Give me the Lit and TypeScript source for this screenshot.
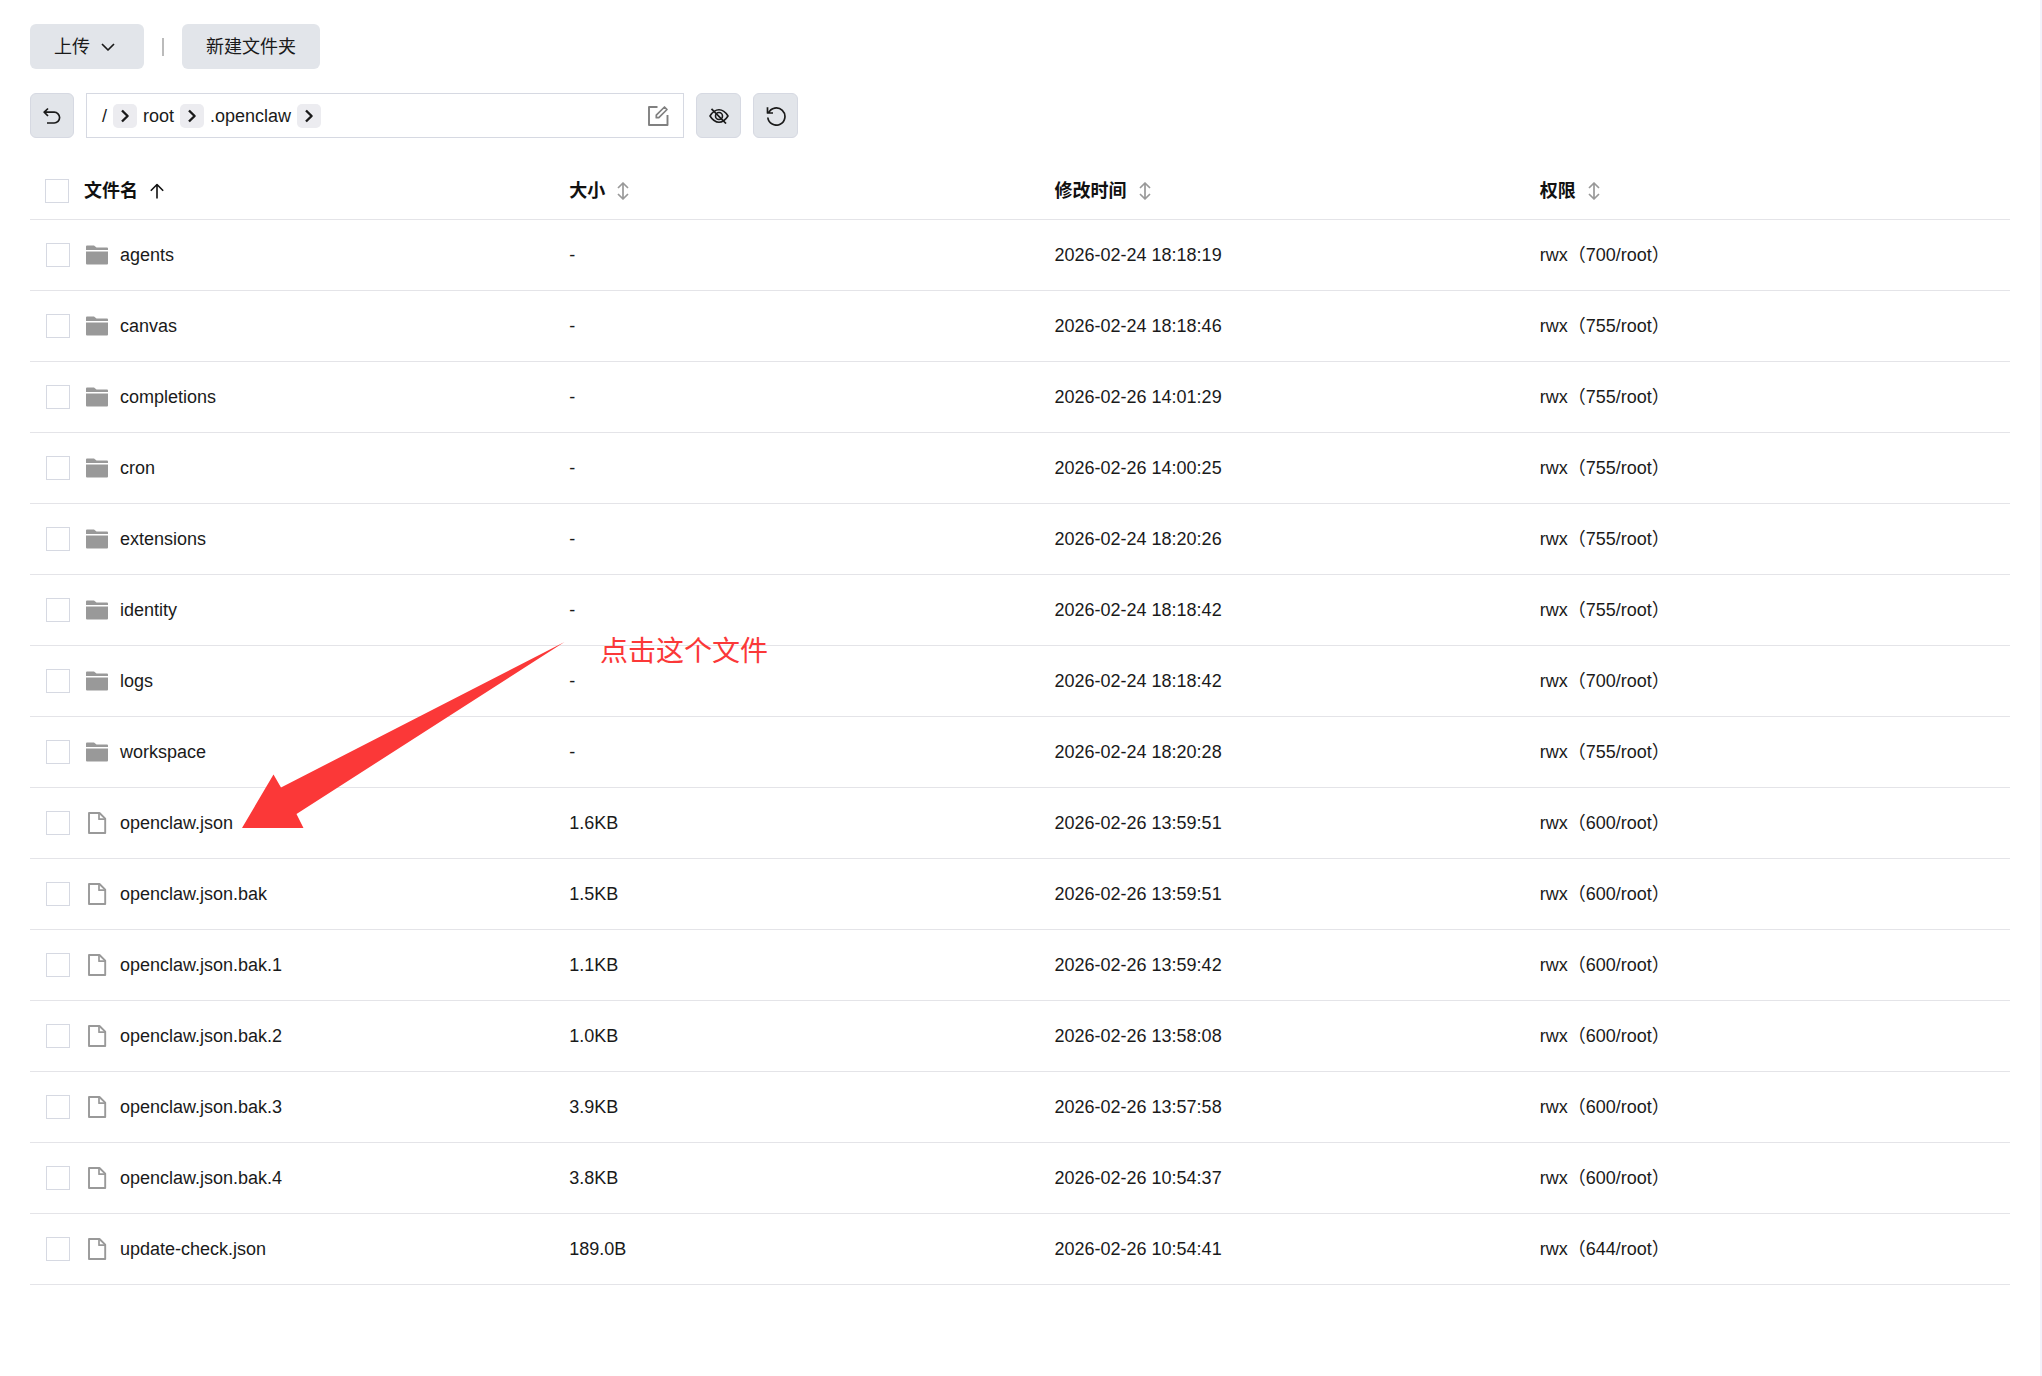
import { LitElement, html, css, svg } from "lit";
import { customElement, property } from "lit/decorators.js";

interface Entry {
  name: string;
  dir: boolean;
  size: string;
  time: string;
  mode: string;
}

const dir = (name: string, time: string, mode: string): Entry => ({ name, dir: true, size: "-", time, mode });
const file = (name: string, size: string, time: string, mode = "600"): Entry => ({ name, dir: false, size, time, mode });

const entries: Entry[] = [
  dir("agents", "2026-02-24 18:18:19", "700"),
  dir("canvas", "2026-02-24 18:18:46", "755"),
  dir("completions", "2026-02-26 14:01:29", "755"),
  dir("cron", "2026-02-26 14:00:25", "755"),
  dir("extensions", "2026-02-24 18:20:26", "755"),
  dir("identity", "2026-02-24 18:18:42", "755"),
  dir("logs", "2026-02-24 18:18:42", "700"),
  dir("workspace", "2026-02-24 18:20:28", "755"),
  file("openclaw.json", "1.6KB", "2026-02-26 13:59:51"),
  file("openclaw.json.bak", "1.5KB", "2026-02-26 13:59:51"),
  file("openclaw.json.bak.1", "1.1KB", "2026-02-26 13:59:42"),
  file("openclaw.json.bak.2", "1.0KB", "2026-02-26 13:58:08"),
  file("openclaw.json.bak.3", "3.9KB", "2026-02-26 13:57:58"),
  file("openclaw.json.bak.4", "3.8KB", "2026-02-26 10:54:37"),
  file("update-check.json", "189.0B", "2026-02-26 10:54:41", "644"),
];

const glyphs: Record<string, { w: number; h: number; body: unknown }> = {
  down: { w: 14, h: 10, body: svg`<path d="M1 2l6 6 6-6" stroke-width="1.7"/>` },
  right: { w: 10, h: 14, body: svg`<path d="M2 1.5L7.6 7 2 12.5" stroke-width="2.4"/>` },
  back: { w: 18, h: 18, body: svg`<path d="M5 1.500L1.200 5.200 5 9M1.500 5.200H11.200a5.400 5.400 0 0 1 0 10.800H4" stroke-width="1.700"/>` },
  edit: { w: 22, h: 22, body: svg`<path d="M10.500 2H2v18h18.500V10" stroke-width="1.900"/><path d="M9.300 12.700V10.200L17.500 2 20 4.500 11.800 12.700z" stroke-width="1.700"/>` },
  eye: { w: 20, h: 16, body: svg`<path d="M1 8C3.500 4 6.500 1.800 10 1.800S16.500 4 19 8C16.500 12 13.500 14.200 10 14.200S3.500 12 1 8z" stroke-width="1.600"/><circle cx="10" cy="8" r="3.500" stroke-width="1.600"/><path d="M2.500.8L17 15.500" stroke-width="1.700"/>` },
  reload: { w: 20, h: 20, body: svg`<path d="M2.500 7A8.600 8.600 0 1 1 1.800 11.500M1.500 1.300V7H7" stroke-width="1.700"/>` },
  up: { w: 14, h: 16, body: svg`<path d="M7 15.500V1.500M.8 7.700L7 1.500l6.200 6.200" stroke-width="1.600"/>` },
  sort: { w: 12, h: 18, body: svg`<path d="M6 1.500v15M1 6l5-5 5 5M1 12l5 5 5-5" stroke-width="1.700"/>` },
  folder: { w: 22, h: 20, body: svg`<path d="M0 5V1.500Q0 .5 1 .5H8L10.500 2.500H21Q22 2.500 22 3.500V5z" fill="currentColor" stroke="none"/><path d="M0 6.500H22V18.500Q22 19.500 21 19.500H1Q0 19.500 0 18.500z" fill="currentColor" stroke="none"/>` },
  file: { w: 22, h: 22, body: svg`<path d="M3 1H13.500L19.200 6.700V21H3z" stroke-width="1.900"/><path d="M13 1V7.200H19.200" stroke-width="1.700"/>` },
};

@customElement("ui-icon")
export class UiIcon extends LitElement {
  @property() name = "";
  static styles = css`
    :host { display: inline-flex; flex: none; }
    .glyph { display: block; fill: none; stroke: currentColor; stroke-linejoin: round; }
  `;
  render() {
    const g = glyphs[this.name];
    return html`<svg class="glyph" width=${g.w} height=${g.h} viewBox="0 0 ${g.w} ${g.h}" aria-hidden="true">${g.body}</svg>`;
  }
}

@customElement("app-root")
export class AppRoot extends LitElement {
  static styles = css`
    :host {
      display: block;
      box-sizing: border-box;
      min-height: 100vh;
      padding: 24px 30px;
      border-right: 2px solid #f3f3fb;
      background: #fff;
      color: #1a1a1a;
      font: 18px/24px "Liberation Sans", "Noto Sans CJK SC", sans-serif;
    }
    .toolbar, .pathbar { display: flex; align-items: center; }
    .toolbar { gap: 18px; }
    .pathbar { gap: 12px; margin: 24px 0 26px; }
    button { font: inherit; color: inherit; cursor: pointer; }
    .btn {
      display: flex;
      align-items: center;
      justify-content: center;
      height: 45px;
      padding: 0 24px;
      border: 0;
      border-radius: 6px;
      background: #e2e5ea;
    }
    .drop { gap: 11px; padding-right: 29px; }
    .divider { width: 2px; height: 18px; background: #bbb; }
    .square { width: 45px; padding: 0; border: 1px solid #d6d9e2; }
    .back { width: 44px; }
    .path {
      box-sizing: border-box;
      display: flex;
      align-items: center;
      gap: 6px;
      flex: 0 1 598px;
      height: 45px;
      padding: 0 14px 0 15px;
      border: 1px solid #d6d9e2;
    }
    a { color: inherit; text-decoration: none; }
    .step, .plain, .sort {
      display: inline-flex;
      align-items: center;
      justify-content: center;
      padding: 0;
      border: 0;
      background: none;
    }
    .step { width: 24px; height: 24px; border-radius: 5px; background: #ececf0; }
    .edit { margin-left: auto; color: #808080; }
    .files { position: relative; }
    table { width: 100%; table-layout: fixed; border-collapse: separate; border-spacing: 0; }
    .pick { width: 39px; }
    th, td {
      box-sizing: border-box;
      padding: 0 0 0 15px;
      border-bottom: 1px solid #e4e4e8;
      text-align: left;
      vertical-align: middle;
      white-space: nowrap;
    }
    th { height: 56px; padding-bottom: 2px; font-weight: 700; color: #111; }
    td { height: 71px; }
    .box { padding-left: 16px; }
    .sort { gap: 12px; font-weight: 700; }
    .muted { color: #999; }
    .check {
      appearance: none;
      box-sizing: border-box;
      display: block;
      width: 24px;
      height: 24px;
      margin: 0;
      border: 1px solid #d6d9e2;
      background: #fff;
    }
    .name { display: flex; align-items: center; gap: 12px; padding-left: 2px; }
    .kind { color: #999; }
    .arrow { position: absolute; left: 212px; top: 478px; fill: #fb3838; pointer-events: none; }
    .note {
      position: absolute;
      left: 570px;
      top: 468px;
      margin: 0;
      font-size: 28px;
      line-height: 40px;
      color: #fb3838;
      pointer-events: none;
    }
  `;

  private header(label: string, icon = "sort") {
    return html`<th scope="col" aria-sort=${icon === "up" ? "ascending" : "none"}>
      <button class="sort">${label}<ui-icon class=${icon === "up" ? "" : "muted"} name=${icon}></ui-icon></button>
    </th>`;
  }

  private row(e: Entry) {
    return html`<tr>
      <td class="box"><input class="check" type="checkbox" aria-label=${e.name}></td>
      <td><a class="name" href="#"><ui-icon class="kind" name=${e.dir ? "folder" : "file"}></ui-icon>${e.name}</a></td>
      <td>${e.size}</td>
      <td>${e.time}</td>
      <td>rwx（${e.mode}/root）</td>
    </tr>`;
  }

  render() {
    return html`
      <div class="toolbar">
        <button class="btn drop">上传<ui-icon name="down"></ui-icon></button>
        <span class="divider"></span>
        <button class="btn">新建文件夹</button>
      </div>
      <div class="pathbar">
        <button class="btn square back" aria-label="返回"><ui-icon name="back"></ui-icon></button>
        <nav class="path">
          ${["/", "root", ".openclaw"].map((p) => html`<a href="#">${p}</a>
            <button class="step" aria-label="展开"><ui-icon name="right"></ui-icon></button>`)}
          <button class="plain edit" aria-label="编辑路径"><ui-icon name="edit"></ui-icon></button>
        </nav>
        <button class="btn square" aria-label="隐藏文件"><ui-icon name="eye"></ui-icon></button>
        <button class="btn square" aria-label="刷新"><ui-icon name="reload"></ui-icon></button>
      </div>
      <div class="files">
        <table>
          <thead>
            <tr>
              <th class="pick"><input class="check" type="checkbox" aria-label="全选"></th>
              ${this.header("文件名", "up")}${this.header("大小")}${this.header("修改时间")}${this.header("权限")}
            </tr>
          </thead>
          <tbody>${entries.map((e) => this.row(e))}</tbody>
        </table>
        <svg class="arrow" width="324" height="188" viewBox="0 0 324 188" aria-hidden="true">
          <path d="M322.500 0L39 145.500L31.500 132.500L0 186H61.500L54.500 172z"/>
        </svg>
        <p class="note">点击这个文件</p>
      </div>
    `;
  }
}
